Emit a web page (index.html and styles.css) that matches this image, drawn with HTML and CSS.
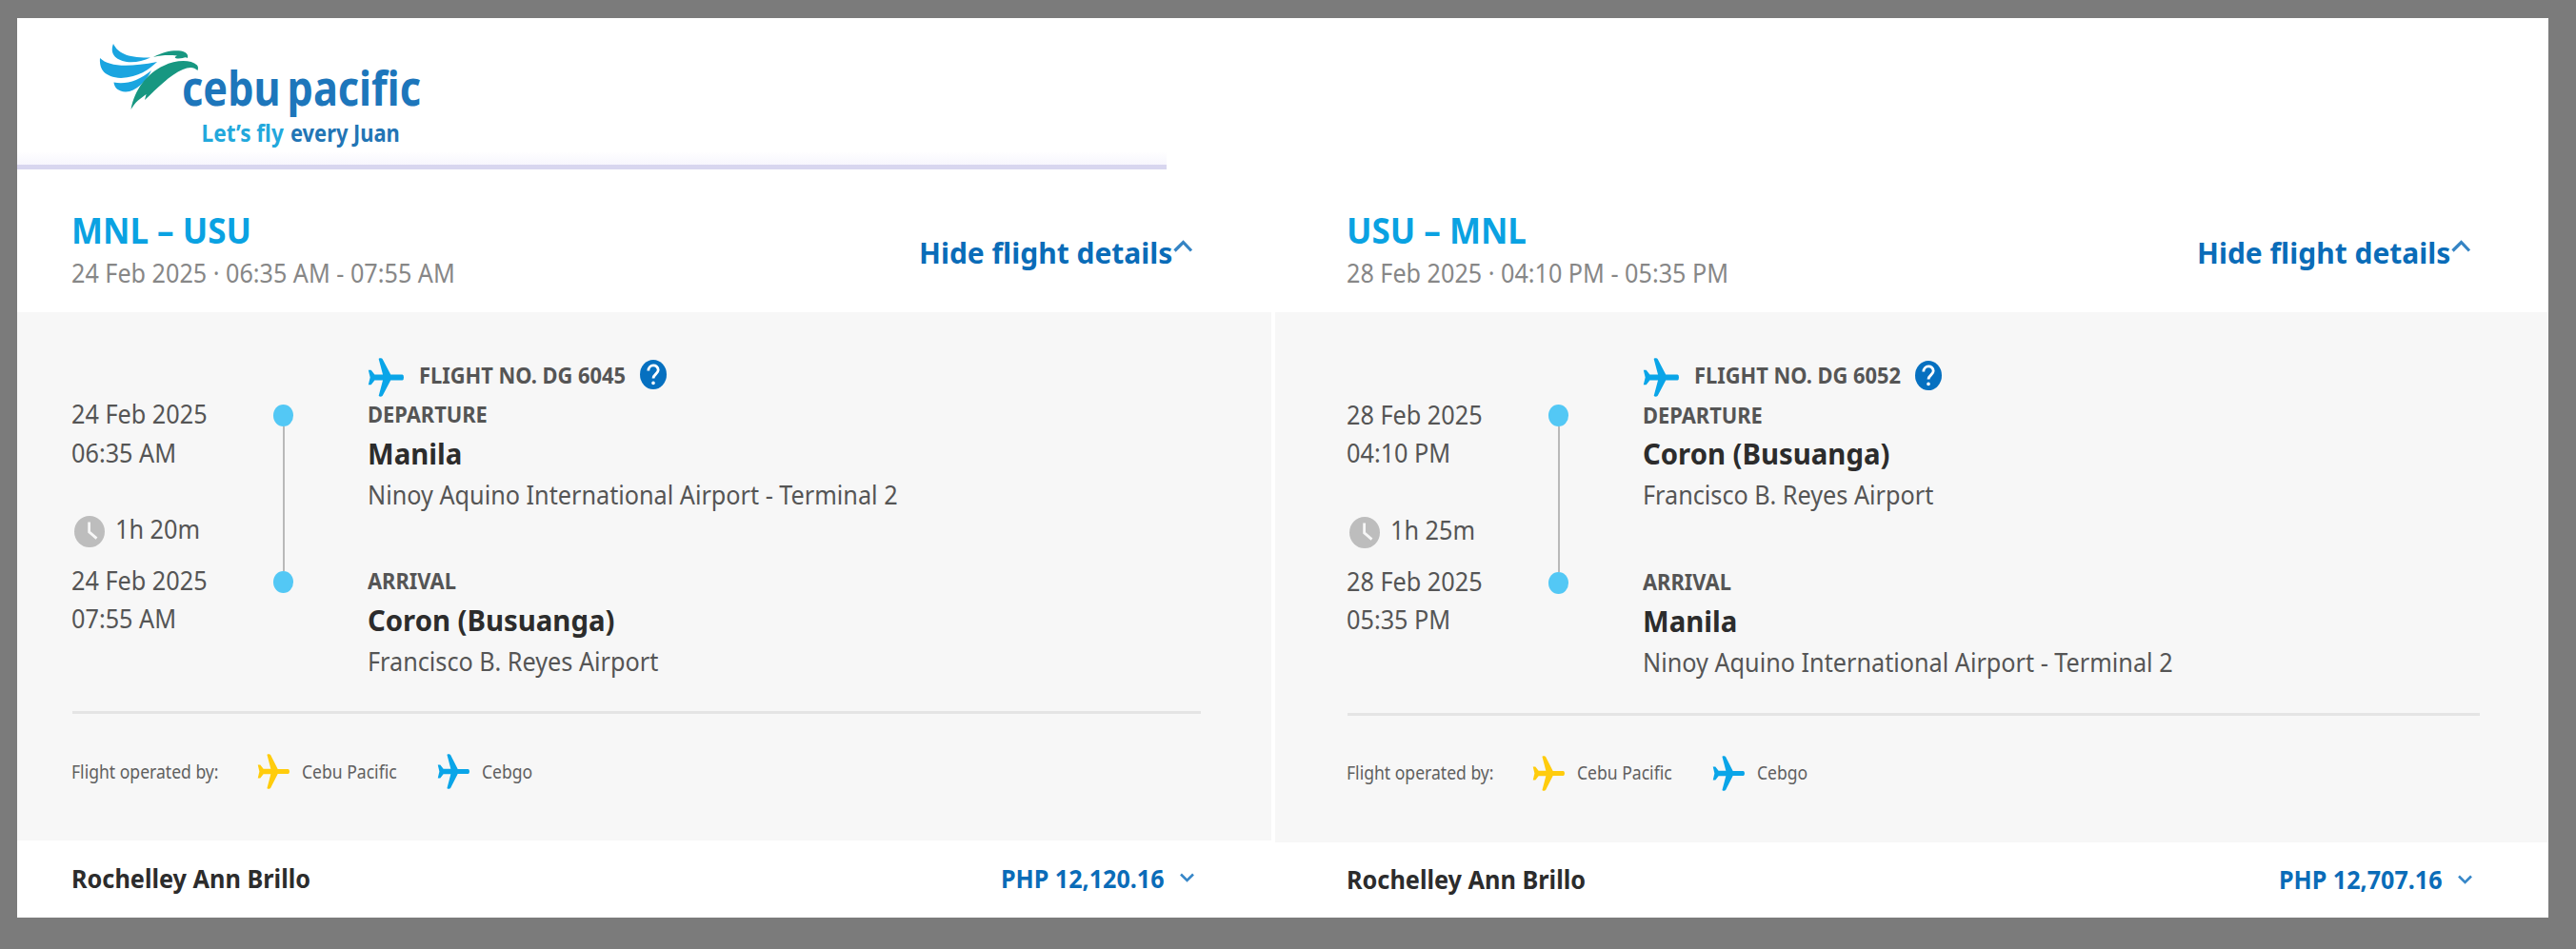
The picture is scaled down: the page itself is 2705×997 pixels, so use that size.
FILE: index.html
```html
<!DOCTYPE html>
<html lang="en">
<head>
<meta charset="utf-8">
<title>Flight details</title>
<link rel="stylesheet" href="styles.css">
</head>
<body>
<svg class="defs" width="0" height="0">
  <symbol id="plane" viewBox="0 0 37 41" preserveAspectRatio="none">
    <path d="M11.4 1.2C11.2.2 14.6 0 15.3 1.2L23.6 17.6H35.5Q37 17.8 37 20.5Q37 23.2 35.5 23.4H23.6L15.3 39.8C14.6 41 11.2 40.8 11.4 39.8L15.6 23.6H7.2L3.6 28.2H.8L2.6 20.5L.8 12.8H3.6L7.2 17.4H15.6Z"/>
  </symbol>
  <symbol id="clock" viewBox="0 0 32 33" preserveAspectRatio="none">
    <ellipse cx="16" cy="16.5" rx="16" ry="16.5" fill="#bdbdbd"/>
    <path d="M15.6 6.5V16.8L23.5 23.6" fill="none" stroke="#f7f7f7" stroke-width="2.8"/>
  </symbol>
  <symbol id="help" viewBox="0 0 28 31" preserveAspectRatio="none">
    <ellipse cx="14" cy="15.5" rx="14" ry="15.5" fill="#0670c0"/>
    <path d="M8.8 11.6C8.8 4.2 19.2 4.2 19.2 10.8C19.2 14.6 14 15.2 14 19.6" fill="none" stroke="#fff" stroke-width="2.8"/>
    <circle cx="14" cy="24.4" r="1.8" fill="#fff"/>
  </symbol>
</svg>
<main class="card">
  <header class="brand">
    <svg class="logo" width="360" height="125" viewBox="0 0 360 125">
      <g fill="#1aa5e0">
        <path d="M19 7C24 17 34 22 58 21.500C50 25 42 27 33 26C21 24 15 17 19 7Z"/>
        <path d="M5 22C14 31 34 32 65 26C56 34 46 42 27 43C10 42 4 34 5 22Z"/>
        <path d="M19.500 47.500C32 50 46 46 59 35C53 47 43 57 32 57.500C24 57 20 53 19.500 47.500Z"/>
      </g>
      <g fill="#179781">
        <path d="M61 21C72 15 82 13.500 90 14.500C96 15.500 98 19 97 22C94 20 92 23 86 22.500C83 22 83 21 86 19.500C76 18.500 70 19 61 21Z"/>
        <path d="M37.500 76C41 56 54 38 72 30C84 24 100 23 107 29.500C108.500 31.500 108 33.500 107.500 35C103 30.500 98 31.500 92 34C78 40 66 53 52 66L53.500 60L45 66.500C42 69 40 72 37.500 76Z"/>
      </g>
      <text class="wordmark" x="91" y="71.500" textLength="251" lengthAdjust="spacingAndGlyphs">cebu pacific</text>
      <text class="tagline" transform="translate(111.500 110) scale(.905 1)">Let’s fly</text>
      <text class="tagline deep" transform="translate(205 110) scale(.875 1)">every Juan</text>
    </svg>
  </header>
  <div class="panels">
    <section class="panel outbound">
      <div class="head">
        <div><h1 class="title">MNL – USU</h1><p class="date">24 Feb 2025 · 06:35 AM - 07:55 AM</p></div>
        <a class="hide"><span>Hide flight details</span><svg width="20" height="13" viewBox="0 0 20 13"><path d="M1.500 11.500L10.500 2.500L19 11.500" fill="none" stroke="#3584c4" stroke-width="3.200"/></svg></a>
      </div>
      <div class="details">
        <div class="trip">
          <div class="times">
            <p>24 Feb 2025</p><p>06:35 AM</p>
            <p class="duration"><svg width="32" height="33"><use href="#clock"/></svg><span>1h 20m</span></p>
            <p>24 Feb 2025</p><p>07:55 AM</p>
          </div>
          <div class="line"><i></i><b></b><i></i></div>
          <div class="info">
            <div class="flight"><svg class="blue" width="38" height="41"><use href="#plane"/></svg><span class="label">FLIGHT NO. DG 6045</span><svg class="q" width="28" height="31"><use href="#help"/></svg></div>
            <div class="stop"><p class="label">DEPARTURE</p><p class="city">Manila</p><p class="airport">Ninoy Aquino International Airport - Terminal 2</p></div>
            <div class="stop"><p class="label">ARRIVAL</p><p class="city">Coron (Busuanga)</p><p class="airport">Francisco B. Reyes Airport</p></div>
          </div>
        </div>
        <div class="ops">
          <span class="by">Flight operated by:</span>
          <svg class="yellow" width="34" height="37"><use href="#plane"/></svg><span class="cp">Cebu Pacific</span>
          <svg class="blue" width="34" height="37"><use href="#plane"/></svg><span>Cebgo</span>
        </div>
      </div>
      <div class="foot"><span class="name">Rochelley Ann Brillo</span><span class="price">PHP 12,120.16</span><svg width="15" height="10" viewBox="0 0 15 10"><path d="M1 1.500L7.500 8L14 1.500" fill="none" stroke="#3787c8" stroke-width="2.600"/></svg></div>
    </section>
    <section class="panel inbound">
      <div class="head">
        <div><h1 class="title">USU – MNL</h1><p class="date">28 Feb 2025 · 04:10 PM - 05:35 PM</p></div>
        <a class="hide"><span>Hide flight details</span><svg width="20" height="13" viewBox="0 0 20 13"><path d="M1.500 11.500L10.500 2.500L19 11.500" fill="none" stroke="#3584c4" stroke-width="3.200"/></svg></a>
      </div>
      <div class="details">
        <div class="trip">
          <div class="times">
            <p>28 Feb 2025</p><p>04:10 PM</p>
            <p class="duration"><svg width="32" height="33"><use href="#clock"/></svg><span>1h 25m</span></p>
            <p>28 Feb 2025</p><p>05:35 PM</p>
          </div>
          <div class="line"><i></i><b></b><i></i></div>
          <div class="info">
            <div class="flight"><svg class="blue" width="38" height="41"><use href="#plane"/></svg><span class="label">FLIGHT NO. DG 6052</span><svg class="q" width="28" height="31"><use href="#help"/></svg></div>
            <div class="stop"><p class="label">DEPARTURE</p><p class="city">Coron (Busuanga)</p><p class="airport">Francisco B. Reyes Airport</p></div>
            <div class="stop"><p class="label">ARRIVAL</p><p class="city">Manila</p><p class="airport">Ninoy Aquino International Airport - Terminal 2</p></div>
          </div>
        </div>
        <div class="ops">
          <span class="by">Flight operated by:</span>
          <svg class="yellow" width="34" height="37"><use href="#plane"/></svg><span class="cp">Cebu Pacific</span>
          <svg class="blue" width="34" height="37"><use href="#plane"/></svg><span>Cebgo</span>
        </div>
      </div>
      <div class="foot"><span class="name">Rochelley Ann Brillo</span><span class="price">PHP 12,707.16</span><svg width="15" height="10" viewBox="0 0 15 10"><path d="M1 1.500L7.500 8L14 1.500" fill="none" stroke="#3787c8" stroke-width="2.600"/></svg></div>
    </section>
  </div>
</main>
</body>
</html>
```
FILE: styles.css
```css
* { box-sizing: border-box; margin: 0; padding: 0; }
html, body { height: 100%; }
body { background: #7b7b7b; padding: 19px 29px 33px 18px; font-family: "Noto Sans", sans-serif; color: #555; overflow: hidden; }
svg { display: block; flex: none; }
.defs { position: absolute; }
p, span, h1 { white-space: nowrap; transform-origin: 0 50%; }

.card { height: 945px; background: #fff; display: flex; flex-direction: column; }
.brand { width: 1207px; height: 159px; padding: 20px 0 0 82px; border-bottom: 5px solid #d8d6ef; background: linear-gradient(#fff 140px, #f7f6fd 154px); }
.logo { overflow: visible; }
.wordmark { font-size: 51px; font-weight: 700; fill: #1d76bb; word-spacing: -5px; }
.tagline { font-size: 25px; font-weight: 700; fill: #22a8dc; }
.tagline.deep { fill: #2275b5; }

.panels { flex: 1; display: grid; grid-template-columns: 1316.500px 1fr; column-gap: 4px; }
.panel { display: flex; flex-direction: column; }
.head { height: 150.400px; padding-left: 57px; display: flex; justify-content: space-between; }
.title { font-size: 38px; line-height: 46px; font-weight: 700; color: #0aa2e2; margin-top: 39.500px; transform: scaleX(.921); }
.date { font-size: 27px; line-height: 38px; color: #878787; margin-top: 4.500px; transform: scaleX(.932); }
.hide { display: flex; width: 370px; padding-top: 67px; color: #0a6cb8; font-size: 31px; line-height: 40px; font-weight: 700; }
.hide span { width: 267px; transform: scaleX(.967); }
.hide svg { margin-top: 7px; }

.details { height: 554.500px; background: #f7f7f7; padding: 48.500px 73.500px 0 57px; }
.trip { display: flex; height: 370.500px; }
.times { width: 211.500px; padding-top: 38.200px; font-size: 27px; line-height: 40.600px; }
.times p:not(.duration), .duration span { transform: scaleX(.935); }
.times .duration { display: flex; align-items: center; gap: 10.500px; margin: 39.800px 0 13.200px 3px; }
.duration svg { position: relative; top: 2.500px; }
.line { width: 22px; margin-right: 77.500px; padding-top: 48px; display: flex; flex-direction: column; align-items: center; }
.line i { width: 21.500px; height: 23px; border-radius: 50%; background: #53c8f5; }
.line b { width: 2px; height: 152px; background: #b9b9b9; }
.info { margin-left: -.5px; }
.flight { display: flex; height: 38.600px; align-items: center; }
.flight .label { width: 232px; margin: -4.500px 0 0 16px; }
.flight .q { margin-top: -5px; }
.label { font-size: 23px; line-height: 40.400px; font-weight: 700; transform: scaleX(.95); }
.city { font-size: 31px; line-height: 41px; font-weight: 700; color: #2c2c2c; transform: scaleX(.945); }
.airport { font-size: 27px; line-height: 45.600px; margin-bottom: 48px; transform: scaleX(.934); }

.ops { display: flex; align-items: center; height: 124px; margin-left: .5px; border-top: 3px solid #e4e4e4; font-size: 19px; color: #606060; }
.ops span { transform: scaleX(.924); }
.ops .by { width: 195px; margin-left: -.5px; }
.ops .cp { width: 143px; }
.ops svg + span { margin-left: 12.500px; }
.ops .cp + svg { margin-left: -.5px; }
.blue { fill: #0aa5e8; }
.yellow { fill: #ffcc0c; }

.foot { flex: 1; display: flex; align-items: center; padding: 0 0 2px 56.500px; font-size: 27px; font-weight: 700; }
.name { width: 976px; color: #2c2c2c; transform: scaleX(.936); }
.price { width: 188px; color: #0a6cb8; transform: scaleX(.929); }

/* Return flight rows run slightly taller than the outbound ones */
.inbound .head { padding-left: 75.500px; }
.inbound .hide { width: 369px; }
.inbound .details { height: 556.500px; padding: 49px 72px 0 75.500px; }
.inbound .trip { height: 371.500px; }
.inbound .airport { margin-bottom: 48.500px; }
.inbound .line b { height: 152.500px; }
.inbound .duration { margin-top: 40.300px; }
.inbound .foot { padding: 0 0 1px 75.500px; }
.inbound .name { width: 978.500px; }
```
